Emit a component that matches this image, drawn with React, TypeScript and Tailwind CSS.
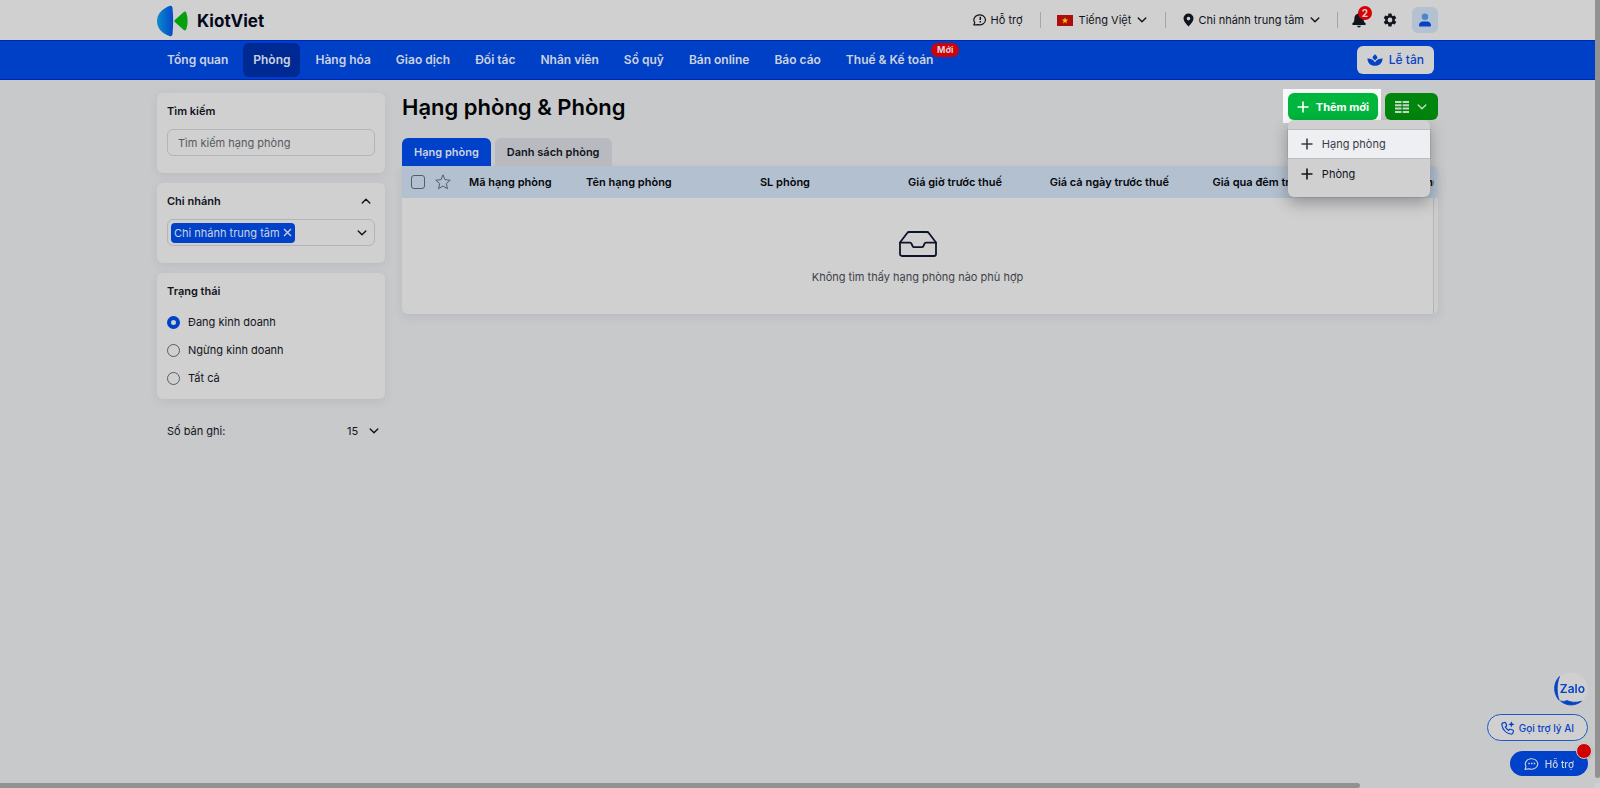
import { useState } from "react";
import type { ReactNode } from "react";

const navItems = [
  "Tổng quan",
  "Phòng",
  "Hàng hóa",
  "Giao dịch",
  "Đối tác",
  "Nhân viên",
  "Sổ quỹ",
  "Bán online",
  "Báo cáo",
  "Thuế & Kế toán",
];

const statuses = ["Đang kinh doanh", "Ngừng kinh doanh", "Tất cả"];

function Chevron({ up = false }: { up?: boolean }) {
  return (
    <svg width="10" height="10" viewBox="0 0 10 10" fill="none" stroke="currentColor" strokeWidth="1.4" strokeLinecap="round" strokeLinejoin="round" aria-hidden="true">
      <path d={up ? "M1.2 7 5 3.2 8.8 7" : "M1.2 3 5 6.8 8.8 3"} />
    </svg>
  );
}

function Plus() {
  return (
    <svg width="12" height="12" viewBox="0 0 12 12" stroke="currentColor" strokeWidth="1.6" aria-hidden="true">
      <path d="M6 .5v11M.5 6h11" />
    </svg>
  );
}

function Logo() {
  return (
    <svg width="32" height="32" viewBox="0 0 32 32" aria-hidden="true">
      <defs>
        <linearGradient id="logo-blue" x1="0" y1="0" x2="1" y2="0">
          <stop offset="0" stopColor="#0a8bcd" />
          <stop offset="1" stopColor="#0649c9" />
        </linearGradient>
      </defs>
      <path d="M12.5.9c1.700-.7 2.700.2 3 2 .9 8 .9 18.200 0 26.200-.3 1.800-1.300 2.700-3 2C5.500 28.500 0 23.500 0 16S5.500 3.500 12.500.9Z" fill="url(#logo-blue)" />
      <path d="M17.800 15.100 26.500 7.200c1.100-1 2.300-.8 2.800.5 1.800 4.800 1.800 11.800 0 16.600-.5 1.300-1.700 1.500-2.800.5l-8.700-7.900c-.6-.6-.6-1.200 0-1.800Z" fill="#07a00d" />
    </svg>
  );
}

function SupportIcon() {
  return (
    <svg width="14" height="14" viewBox="0 0 14 14" fill="none" stroke="currentColor" aria-hidden="true">
      <path d="M.8 12 1.800 9.600A5.800 5 0 1 1 5.200 11.700Z" strokeWidth="1.200" strokeLinejoin="round" />
      <path d="M7.300 3.800v3.300M7.300 8v1.400" strokeWidth="1.500" />
    </svg>
  );
}

function Flag() {
  return (
    <svg width="16" height="11" viewBox="0 0 16 11" aria-hidden="true">
      <path d="M0 0h16v11H0z" fill="#b00d0a" />
      <path d="m8 2.200.8 2.400h2.500L9.300 6.100l.8 2.400L8 7 5.900 8.500l.8-2.400-2-1.500h2.500Z" fill="#e6cf00" />
    </svg>
  );
}

function Pin() {
  return (
    <svg width="11" height="14" viewBox="0 0 11 14" fill="currentColor" aria-hidden="true">
      <path fillRule="evenodd" d="M5.500.5a5 5 0 0 1 5 5c0 3-3 5.700-5 8-2-2.300-5-5-5-8a5 5 0 0 1 5-5Zm0 3.300a1.800 1.800 0 1 0 0 3.600 1.800 1.800 0 0 0 0-3.600Z" />
    </svg>
  );
}

function Bell() {
  return (
    <svg width="14" height="16" viewBox="0 0 14 16" fill="currentColor" aria-hidden="true">
      <path d="M7 .5c.7 0 1.100.5 1.100 1.200 2.300.5 3.500 2.300 3.500 4.800 0 3 .6 3.700 1.700 4.600.8.700.4 1.900-.6 1.900H1.300c-1 0-1.400-1.200-.6-1.900 1.100-.9 1.700-1.600 1.700-4.600 0-2.500 1.200-4.300 3.500-4.800C5.900 1 6.300.5 7 .5ZM5.200 13.800h3.600c0 1-.8 1.700-1.800 1.700s-1.800-.7-1.800-1.700Z" />
    </svg>
  );
}

function Gear() {
  return (
    <svg width="16" height="16" viewBox="0 0 24 24" fill="currentColor" aria-hidden="true">
      <path d="M19.140 12.940c.04-.3.06-.61.06-.94 0-.32-.02-.64-.07-.94l2.030-1.580a.49.49 0 0 0 .12-.61l-1.920-3.320a.488.488 0 0 0-.59-.22l-2.390.96c-.5-.38-1.030-.7-1.620-.94l-.36-2.540a.484.484 0 0 0-.48-.41h-3.840c-.24 0-.43.17-.47.41l-.36 2.540c-.59.24-1.130.57-1.620.94l-2.390-.96c-.22-.08-.47 0-.59.22L2.740 8.870c-.12.21-.08.47.12.61l2.030 1.580c-.05.3-.09.63-.09.94s.02.64.07.94l-2.030 1.580a.49.49 0 0 0-.12.61l1.920 3.320c.12.22.37.29.59.22l2.390-.96c.5.38 1.030.7 1.620.94l.36 2.540c.05.24.24.41.48.41h3.840c.24 0 .44-.17.47-.41l.36-2.540c.59-.24 1.130-.56 1.620-.94l2.390.96c.22.08.47 0 .59-.22l1.920-3.320c.12-.22.07-.47-.12-.61l-2.010-1.580ZM12 15.600A3.600 3.600 0 1 1 12 8.400a3.600 3.600 0 0 1 0 7.200Z" />
    </svg>
  );
}

function Person() {
  return (
    <svg width="14" height="14" viewBox="0 0 14 14" aria-hidden="true">
      <circle cx="7" cy="3.800" r="3.200" fill="#4d84cc" />
      <path d="M1 12.500C1 9.800 2.800 8.500 5 8.500h4c2.200 0 4 1.300 4 4 0 .6-.4 1-1 1H2c-.6 0-1-.4-1-1Z" fill="#0443c6" />
    </svg>
  );
}

function Lotus() {
  return (
    <svg width="16" height="12" viewBox="0 0 16 12" fill="currentColor" aria-hidden="true">
      <path d="M8 .2c1.500 1.200 2.300 2.400 2.500 3.700C9.500 4.700 8.600 5.600 8 6.600 7.400 5.600 6.500 4.700 5.500 3.900 5.700 2.600 6.500 1.400 8 .2Z" />
      <path d="M.4 4.500C4 4.400 6.700 5.800 8 8.600c1.300-2.800 4-4.200 7.600-4.100-.2 4.500-3 7.300-7.600 7.300S.6 9 .4 4.500Z" />
    </svg>
  );
}

function ColumnsIcon() {
  return (
    <svg width="14" height="12" viewBox="0 0 14 12" stroke="currentColor" strokeWidth="2" aria-hidden="true">
      <path d="M0 1h6.500M0 4.300h6.500M0 7.600h6.500M0 11h6.500M7.700 1H14M7.700 4.300H14M7.700 7.600H14M7.700 11H14" />
    </svg>
  );
}

function Star() {
  return (
    <svg width="16" height="16" viewBox="0 0 16 16" fill="none" stroke="#555d69" strokeWidth="1" strokeLinejoin="round" aria-hidden="true">
      <path d="m8 .8 2 4.900 5.200.5-3.900 3.400 1.200 5.100L8 12l-4.500 2.700 1.200-5.100L.8 6.200 6 5.700Z" />
    </svg>
  );
}

function Inbox() {
  return (
    <svg width="38" height="26" viewBox="0 0 38 26" fill="none" stroke="#0c1528" strokeWidth="1.800" strokeLinejoin="round" strokeLinecap="round" aria-hidden="true">
      <path d="M1 11.500 8.200 2c.5-.7 1-1 1.800-1h18c.8 0 1.300.3 1.800 1L37 11.500V23c0 1.200-.8 2-2 2H3c-1.200 0-2-.8-2-2Z" />
      <path d="M1 11.700h10c.8 0 1.300.4 1.600 1.100l1 2.400c.3.700.8 1 1.500 1h7.800c.7 0 1.200-.3 1.500-1l1-2.400c.3-.7.8-1.100 1.600-1.100h10" />
    </svg>
  );
}

function PhoneSpark() {
  return (
    <svg width="14" height="14" viewBox="0 0 14 14" fill="none" stroke="currentColor" strokeWidth="1.200" strokeLinejoin="round" aria-hidden="true">
      <path d="M3.700 1.500 2.200 1.800C1.100 2 .7 3 .9 4c.8 4.600 4 8 8.600 9 1.200.3 2.200-.1 2.500-1.200l.4-1.600c.1-.6-.2-1-.7-1.200L9.500 8.200c-.4-.2-.8 0-1.100.3l-.7.9C6.200 8.700 5 7.400 4.300 6l.9-.8c.4-.3.500-.7.300-1.200L4.700 2c-.2-.4-.5-.6-1-.5Z" />
      <path d="m10.400.2.9 2.200 2.300.9-2.300.9-.9 2.200-.9-2.200-2.300-.9 2.300-.9Z" fill="currentColor" stroke="none" />
    </svg>
  );
}

function ChatDots() {
  return (
    <svg width="15" height="14" viewBox="0 0 15 14" fill="none" stroke="currentColor" aria-hidden="true">
      <path d="M1 12.400 2 9.300A6.200 5.200 0 1 1 5 11.700Z" strokeWidth="1.100" strokeLinejoin="round" />
      <path d="M4.300 6.600h1.500M7 6.600h1.500M9.700 6.600h1.500" strokeWidth="1.500" />
    </svg>
  );
}

function Divider() {
  return <span className="h-4 w-px bg-[#a4a6a9]" />;
}

function Card({ className, children }: { className: string; children: ReactNode }) {
  return <section className={`rounded-md bg-[#d0d0d0] px-2.5 pt-2.5 shadow-[0_3px_10px_rgba(60,70,90,0.09)] ${className}`}>{children}</section>;
}

export default function App() {
  const [status, setStatus] = useState(statuses[0]);
  const [search, setSearch] = useState("");

  return (
    <div className="relative min-h-screen bg-[#c8c9cb] pr-[5px] font-['Inter','Noto_Sans',sans-serif] text-[11px] leading-4 text-[#10141c]">
      <header className="bg-[#d0d0d0]">
        <div className="mx-auto flex h-10 max-w-[1281px] items-center justify-between">
          <a href="#" className="flex items-center gap-2 pt-0.5 text-[17px] font-bold leading-5 text-[#04081c]">
            <Logo />
            KiotViet
          </a>
          <div className="flex items-center">
            <button className="flex items-center gap-1"><SupportIcon />Hỗ trợ</button>
            <span className="mr-4 ml-[17px] flex"><Divider /></span>
            <button className="flex items-center gap-1.5"><Flag />Tiếng Việt<Chevron /></button>
            <span className="mr-[17px] ml-[18px] flex"><Divider /></span>
            <button className="flex items-center gap-1"><Pin />Chi nhánh trung tâm<span className="ml-0.5"><Chevron /></span></button>
            <span className="mr-3.5 ml-[17px] flex"><Divider /></span>
            <button aria-label="Thông báo" className="relative">
              <Bell />
              <span className="absolute -top-1.5 left-1.5 flex size-[14px] items-center justify-center rounded-full bg-[#d50404] text-[10px] leading-3 font-bold text-[#e0d0d0]">2</span>
            </button>
            <button aria-label="Thiết lập" className="ml-4"><Gear /></button>
            <button aria-label="Tài khoản" className="ml-3.5 flex size-[26px] items-center justify-center rounded-md bg-[#b4c1d1]"><Person /></button>
          </div>
        </div>
      </header>

      <nav className="-mr-[5px] border-y border-[#0026c0] bg-[#0040c6] pr-[5px]">
        <div className="mx-auto flex h-[38px] max-w-[1281px] items-center justify-between text-xs">
          <ul className="flex gap-[5px] font-semibold text-[#ccd3e0]">
            {navItems.map((item) => (
              <li key={item} className="relative">
                <a href="#" className={item === "Phòng" ? "flex h-[34px] items-center rounded-md bg-[#002a93] px-2.5" : "flex h-[34px] items-center px-2.5"}>{item}</a>
                {item === "Thuế & Kế toán" && (
                  <span className="absolute top-0 -right-4 h-[14px] rounded-full bg-[#d00208] px-1.5 text-[9px] leading-[14px] font-bold text-[#e3d0d3]">Mới</span>
                )}
              </li>
            ))}
          </ul>
          <button className="mr-1 flex h-7 items-center gap-1.5 rounded-md bg-[#d0d0d0] px-2.5 font-medium text-[#0443c6]"><Lotus />Lễ tân</button>
        </div>
      </nav>

      <main className="mx-auto flex max-w-[1281px] gap-[17px] pt-[13px]">
        <aside className="flex w-[228px] shrink-0 flex-col gap-2.5">
          <Card className="pb-[17px]">
            <label htmlFor="search" className="block font-semibold">Tìm kiếm</label>
            <input
              id="search"
              value={search}
              onChange={(e) => setSearch(e.target.value)}
              placeholder="Tìm kiếm hạng phòng"
              className="mt-2.5 block h-[27px] w-full rounded-md border border-[#b2b4b7] bg-transparent px-2.5 placeholder:text-[#565a61]"
            />
          </Card>
          <Card className="pb-[17px]">
            <h2>
              <button className="flex w-full items-center justify-between pr-1 font-semibold">Chi nhánh<Chevron up /></button>
            </h2>
            <div className="mt-2.5 flex h-[27px] items-center justify-between rounded-md border border-[#b2b4b7] pr-[7px] pl-[3px]">
              <span className="flex h-5 items-center gap-[3px] rounded bg-[#0041ca] px-[3px] text-[#ccd3e0]">
                Chi nhánh trung tâm
                <button aria-label="Bỏ chọn chi nhánh">
                  <svg width="9" height="9" viewBox="0 0 9 9" stroke="currentColor" strokeWidth="1.300"><path d="m1 1 7 7M8 1 1 8" /></svg>
                </button>
              </span>
              <button aria-label="Chọn chi nhánh"><Chevron /></button>
            </div>
          </Card>
          <Card className="pb-[7px]">
            <fieldset>
              <legend className="font-semibold">Trạng thái</legend>
              <div className="pt-[9px]">
                {statuses.map((item) => (
                  <label key={item} className="flex h-7 items-center gap-2">
                    <input
                      type="radio"
                      name="status"
                      checked={status === item}
                      onChange={() => setStatus(item)}
                      className="size-[13px] appearance-none rounded-full border border-[#555d69] checked:border-4 checked:border-[#0041ca]"
                    />
                    {item}
                  </label>
                ))}
              </div>
            </fieldset>
          </Card>
          <div className="mt-3.5 flex items-center justify-between pr-1.5 pl-2.5">
            <label htmlFor="page-size">Số bản ghi:</label>
            <span className="flex items-center gap-2.5">
              <select id="page-size" className="appearance-none bg-transparent">
                <option>15</option>
              </select>
              <Chevron />
            </span>
          </div>
        </aside>

        <section className="min-w-0 flex-1">
          <div className="flex h-[27px] items-center justify-between">
            <h1 className="text-[22px] leading-7 font-semibold text-[#020305]">Hạng phòng &amp; Phòng</h1>
            <div className="flex gap-[7px]">
              <div className="relative">
                <span className="absolute -top-1 -right-[3px] -bottom-[3px] -left-[5px] bg-[#f7f8f9]" />
                <button className="relative flex h-[27px] items-center gap-[7px] rounded-md bg-[#00b63d] px-[9px] font-bold text-white"><Plus />Thêm mới</button>
                <div role="menu" className="absolute top-[27px] left-0 z-10 w-[142px] rounded-md bg-[#d0d0d0] pt-2.5 pb-2 shadow-[0_6px_16px_rgba(0,0,0,0.3)]">
                  <button role="menuitem" className="flex h-[28px] w-full items-center gap-[9px] bg-[#eeeff2] px-[13px] text-[#3a3d45] shadow-[0_0_0_1px_rgba(90,90,90,0.15)]"><Plus />Hạng phòng</button>
                  <button role="menuitem" className="mt-px flex h-[30px] w-full items-center gap-[9px] px-[13px]"><Plus />Phòng</button>
                </div>
              </div>
              <button aria-label="Chọn cột hiển thị" className="flex h-[27px] items-center gap-2 rounded-md bg-[#00850d] pr-[11px] pl-2.5 text-[#c6d8c8]"><ColumnsIcon /><Chevron /></button>
            </div>
          </div>

          <div role="tablist" className="mt-[18px] flex gap-1 font-semibold">
            <button role="tab" aria-selected="true" className="h-7 rounded-t-md bg-[#0041ca] px-3 text-[#ccd3e0]">Hạng phòng</button>
            <button role="tab" aria-selected="false" className="h-7 rounded-t-md bg-[#b9babf] px-3">Danh sách phòng</button>
          </div>

          <div className="overflow-hidden rounded-r-md rounded-bl-md bg-[linear-gradient(#b3c0cf_32px,#cccccd_32px)] pr-1 shadow-[0_3px_10px_rgba(60,70,90,0.12)]">
            <table className="w-full table-fixed border-collapse overflow-hidden">
              <colgroup>
                <col className="w-[33px]" />
                <col className="w-[24px]" />
                <col className="w-[117px]" />
                <col className="w-[126px]" />
                <col className="w-[118px]" />
                <col className="w-[192px]" />
                <col className="w-[167px]" />
                <col className="w-[167px]" />
                <col />
              </colgroup>
              <thead>
                <tr className="h-8 bg-[#b3c0cf] text-left whitespace-nowrap text-[#05070b] [&>th]:font-semibold">
                  <th className="pl-[9px]">
                    <input type="checkbox" aria-label="Chọn tất cả" className="block size-[14px] appearance-none rounded-[3px] border border-[#555d69]" />
                  </th>
                  <th><button aria-label="Yêu thích" className="block"><Star /></button></th>
                  <th className="px-2.5">Mã hạng phòng</th>
                  <th className="px-2.5">Tên hạng phòng</th>
                  <th className="px-2.5 text-right">SL phòng</th>
                  <th className="px-2.5 text-right">Giá giờ trước thuế</th>
                  <th className="px-2.5 text-right">Giá cả ngày trước thuế</th>
                  <th className="px-2.5 text-right">Giá qua đêm trước thuế</th>
                  <th className="overflow-hidden pl-[53px]">Phụ thu</th>
                </tr>
              </thead>
              <tbody>
                <tr>
                  <td colSpan={9} className="h-[116px] border-r border-[#b4b5b8] bg-[#d0d0d0] pt-[3px]">
                    <div className="flex flex-col items-center gap-3 text-[#3e434b]">
                      <Inbox />
                      Không tìm thấy hạng phòng nào phù hợp
                    </div>
                  </td>
                </tr>
              </tbody>
            </table>
          </div>
        </section>
      </main>

      <div className="fixed right-[12px] bottom-3 flex flex-col items-end">
        <a href="#" className="relative flex size-[34px] items-center justify-end text-[12px] font-semibold text-[#0443c6]">
          <svg className="absolute inset-0" width="34" height="34" viewBox="0 0 34 34" aria-hidden="true">
            <circle cx="17" cy="17" r="16.500" fill="#d0d0d0" />
            <path d="M5.500 4.500C-1 11-1 21.500 5.200 28.300 2.400 21 2.600 11.500 5.500 4.500ZM6.500 29c6.200 5.300 14.800 5.300 21 .2-5.600 1.700-10.500 1.300-14.500-.7-2.200 1-4.400 1.200-6.500.5Z" fill="#0443c6" stroke="#0443c6" strokeWidth=".8" />
          </svg>
          <span className="relative pr-[3px]">Zalo</span>
        </a>
        <button className="mt-2 flex h-[27px] items-center gap-1 rounded-full border border-[#2058c4] bg-[#d0d0d0] px-[13px] text-[10px] font-medium text-[#0443c6]"><PhoneSpark />Gọi trợ lý AI</button>
        <button className="relative mt-2.5 flex h-[25px] items-center gap-1.5 rounded-full bg-[#0041ca] px-3.5 text-[10px] font-medium text-[#ccd3e0]">
          <ChatDots />Hỗ trợ
          <span className="absolute -top-2 -right-1 size-4 rounded-full border border-[#d0d0d0] bg-[#d00000] shadow" />
        </button>
      </div>

      <div className="fixed top-0 right-0 bottom-[10px] w-[5px] rounded-b bg-[#919192]" />
      <div className="fixed right-0 bottom-0 h-[5px] w-[5px] bg-[#d0d0d0]" />
      <div className="fixed bottom-0 left-0 h-[5px] w-[85%] rounded-r bg-[#919192]" />
    </div>
  );
}
